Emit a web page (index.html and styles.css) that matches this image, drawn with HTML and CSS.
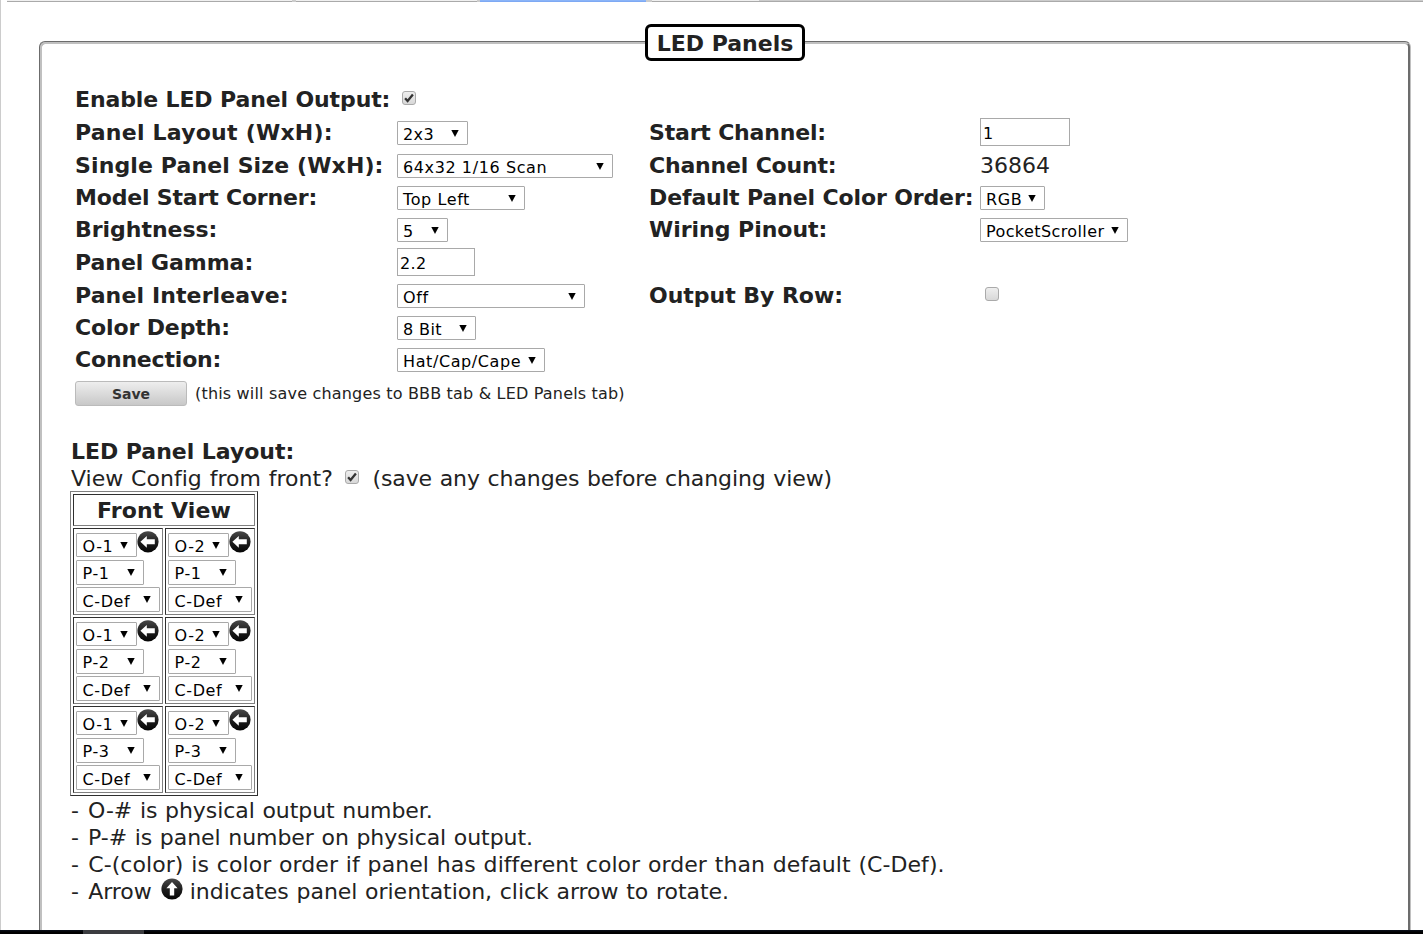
FILE: index.html
```html
<!DOCTYPE html>
<html lang="en">
<head>
<meta charset="utf-8">
<title>LED Panels</title>
<link rel="stylesheet" href="styles.css">
</head>
<body>
<svg class="defs" width="0" height="0">
  <defs>
    <linearGradient id="disc" x1="0" y1="0" x2="0" y2="1"><stop offset="0" stop-color="#484848"/><stop offset=".55" stop-color="#1c1c1c"/><stop offset="1" stop-color="#050505"/></linearGradient>
    <symbol id="left" viewBox="0 0 22 22"><circle cx="11" cy="10.8" r="10.6" fill="url(#disc)"/><path d="M3.4 10.8 9.8 5V8.3H17.8V13.2H9.8V16.8Z" fill="#fff"/></symbol>
    <symbol id="up" viewBox="0 0 22 22"><circle cx="11" cy="11" r="10.6" fill="url(#disc)"/><path d="M11 4 16.6 10.2H13.2V17.6H8.8V10.2H5.4Z" fill="#fff"/></symbol>
    <symbol id="caret" viewBox="0 0 8 7"><path d="M.3 0H7.7L4 7Z"/></symbol>
    <symbol id="check" viewBox="0 0 14 14"><path d="M3.1 7.2 5.6 10 10.9 3.6" fill="none" stroke="#333" stroke-width="2.3"/></symbol>
  </defs>
</svg>
<div class="page">
  <div class="tabs"><i class="tab t1"></i><i class="tab t2"></i><i class="tab active"></i><i class="tab t3"></i><i class="strip"></i></div>
  <section class="panel">
    <h1 class="legend">LED Panels</h1>
    <div class="form">
      <b>Enable LED Panel Output:</b><span class="box main"><svg><use href="#check"/></svg></span><b></b><span></span>
      <b class="loose">Panel Layout (WxH):</b><div class="select snug" style="width:71px">2x3<svg><use href="#caret"/></svg></div><b class="tight">Start Channel:</b><div class="input" style="width:90px">1</div>
      <b class="semi">Single Panel Size (WxH):</b><div class="select" style="width:216px">64x32 1/16 Scan<svg><use href="#caret"/></svg></div><b class="tight">Channel Count:</b><span class="value">36864</span>
      <b class="tight">Model Start Corner:</b><div class="select" style="width:128px">Top Left<svg><use href="#caret"/></svg></div><b>Default Panel Color Order:</b><div class="select" style="width:65px">RGB<svg><use href="#caret"/></svg></div>
      <b class="even">Brightness:</b><div class="select" style="width:51px">5<svg><use href="#caret"/></svg></div><b class="even">Wiring Pinout:</b><div class="select snug" style="width:148px">PocketScroller<svg><use href="#caret"/></svg></div>
      <b class="even">Panel Gamma:</b><div class="input" style="width:78px">2.2</div><b></b><span></span>
      <b class="semi">Panel Interleave:</b><div class="select" style="width:188px">Off<svg><use href="#caret"/></svg></div><b class="even">Output By Row:</b><span class="box row"></span>
      <b>Color Depth:</b><div class="select snug" style="width:79px">8 Bit<svg><use href="#caret"/></svg></div><b></b><span></span>
      <b class="tight">Connection:</b><div class="select" style="width:148px">Hat/Cap/Cape<svg><use href="#caret"/></svg></div><b></b><span></span>
    </div>
    <div class="save"><button>Save</button><span>(this will save changes to BBB tab &amp; LED Panels tab)</span></div>
    <div class="layout">
      <b class="line even">LED Panel Layout:</b>
      <div class="line view"><span class="question">View Config from front?</span><span class="box"><svg><use href="#check"/></svg></span><span class="hint">(save any changes before changing view)</span></div>
      <div class="grid">
        <b class="front">Front View</b>
        <div class="cell"><div class="top"><div class="select o">O-1<svg><use href="#caret"/></svg></div><svg class="arrow"><use href="#left"/></svg></div><div class="select p">P-1<svg><use href="#caret"/></svg></div><div class="select c">C-Def<svg><use href="#caret"/></svg></div></div>
        <div class="cell"><div class="top"><div class="select o">O-2<svg><use href="#caret"/></svg></div><svg class="arrow"><use href="#left"/></svg></div><div class="select p">P-1<svg><use href="#caret"/></svg></div><div class="select c">C-Def<svg><use href="#caret"/></svg></div></div>
        <div class="cell"><div class="top"><div class="select o">O-1<svg><use href="#caret"/></svg></div><svg class="arrow"><use href="#left"/></svg></div><div class="select p">P-2<svg><use href="#caret"/></svg></div><div class="select c">C-Def<svg><use href="#caret"/></svg></div></div>
        <div class="cell"><div class="top"><div class="select o">O-2<svg><use href="#caret"/></svg></div><svg class="arrow"><use href="#left"/></svg></div><div class="select p">P-2<svg><use href="#caret"/></svg></div><div class="select c">C-Def<svg><use href="#caret"/></svg></div></div>
        <div class="cell"><div class="top"><div class="select o">O-1<svg><use href="#caret"/></svg></div><svg class="arrow"><use href="#left"/></svg></div><div class="select p">P-3<svg><use href="#caret"/></svg></div><div class="select c">C-Def<svg><use href="#caret"/></svg></div></div>
        <div class="cell"><div class="top"><div class="select o">O-2<svg><use href="#caret"/></svg></div><svg class="arrow"><use href="#left"/></svg></div><div class="select p">P-3<svg><use href="#caret"/></svg></div><div class="select c">C-Def<svg><use href="#caret"/></svg></div></div>
      </div>
      <div class="notes">
        <div class="line"><span class="dash">-</span> O-# is physical output number.</div>
        <div class="line"><span class="dash">-</span> P-# is panel number on physical output.</div>
        <div class="line color-note"><span class="dash">-</span> C-(color) is color order if panel has different color order than default (C-Def).</div>
        <div class="line last"><span><span class="dash">-</span> Arrow</span><svg class="arrow"><use href="#up"/></svg><span>indicates panel orientation, click arrow to rotate.</span></div>
      </div>
    </div>
  </section>
  <div class="taskbar"><i></i></div>
</div>
</body>
</html>
```
FILE: styles.css
```css
* { box-sizing: border-box; }
body { margin: 0; background: #fff; color: #222; font: 22px/27px "DejaVu Sans", Verdana, sans-serif; letter-spacing: 0; overflow: hidden; }
.defs { position: absolute; }
.page { height: 934px; border-left: 1px solid #ccc; display: flex; flex-direction: column; white-space: nowrap; }
.tabs { height: 2px; display: flex; padding-left: 6px; flex: none; background: linear-gradient(90deg, transparent 7px, #ccc 7px); }
.tabs i { height: 2px; background: #f0f0f0; border-bottom: 1px solid #aaa; }
.tabs .t1 { width: 285px; }
.tabs .t2 { width: 181px; margin-left: 4px; }
.tabs .active { width: 166px; margin-left: 3px; background: #8ab4f8; border-color: #7ea9f3; }
.tabs .t3 { width: 107px; margin-left: 6px; }
.tabs .strip { flex: 1; background: #ccc; }
.panel { width: 1372px; height: 889px; margin: 39px 0 0 38px; border: 3px groove #c0c0c0; border-bottom: 0; border-radius: 6px; border-bottom-left-radius: 0; border-bottom-right-radius: 0; flex: none; }
.legend { width: 160px; height: 37px; margin: -20px 0 0 603px; border: 3px solid #000; border-radius: 6px; background: #fff; text-align: center; font-size: 22px; line-height: 33px; }
.form { display: grid; grid-template-columns: 322px 252px 331px 200px; grid-template-rows: 33px 33px 32px 32px 33px 33px 32px 32px 32px; margin: 22px 0 0 33px; align-items: start; }
.form b, .value { line-height: 33px; }
.form b { letter-spacing: -0.12px; }
.form .tight { letter-spacing: -0.18px; }
.form .even, .even { letter-spacing: -0.03px; }
.form .semi { letter-spacing: 0.12px; }
.form .loose { letter-spacing: 0.23px; }
.select { height: 24px; margin-top: 5px; border: 1px solid #a9a9a9; border-radius: 1px; padding: 1px 8px 0 5px; display: flex; justify-content: space-between; color: #000; font-size: 16px; line-height: 23px; letter-spacing: 0.6px; background: #fff; }
.select.snug { letter-spacing: 0.4px; }
.select svg { width: 8px; height: 7px; margin-top: 7px; flex: none; }
.input { height: 28px; margin-top: 2px; border: 1px solid #a9a9a9; padding: 1px 2px; color: #000; font-size: 16px; line-height: 28px; letter-spacing: 0.4px; }
.box { width: 14px; height: 14px; border: 1px solid #aaa; border-radius: 3px; background: linear-gradient(#eee, #d8d8d8); display: block; flex: none; }
.box svg { display: block; width: 14px; height: 14px; margin: -1px; }
.box.main { margin: 8px 0 0 5px; }
.box.row { margin: 8px 0 0 5px; }
.save { display: flex; margin: 6px 0 0 33px; height: 25px; align-items: center; font-size: 16px; letter-spacing: 0.18px; gap: 8px; }
.save button { width: 112px; height: 25px; border: 1px solid #bbb; border-radius: 3px; background: linear-gradient(#eee, #c8c8c8); color: #333; padding: 0; font: bold 14px "DejaVu Sans", sans-serif; }
.layout { margin: 32px 0 0 29px; }
.line { display: block; height: 27px; }
.view { display: flex; align-items: center; word-spacing: 0.75px; }
.question { letter-spacing: 0.03px; }
.hint { letter-spacing: -0.09px; }
.view .box { margin: -4px 13px 0 12.5px; }
.grid { display: grid; grid-template-columns: 90px 90px; grid-template-rows: 32px 87px 87px 87px; gap: 2px; width: 188px; height: 305px; margin: -1px 0 0 -1px; padding: 2px; border: 1px solid; border-color: #808080 #303030 #303030 #808080; }
.front { grid-column: 1 / 3; border: 1px solid; border-color: #303030 #808080 #808080 #303030; text-align: center; line-height: 32px; letter-spacing: 0.1px; }
.cell { border: 1px solid; border-color: #303030 #808080 #808080 #303030; padding: 2px; }
.top { display: flex; height: 29px; }
.cell .select { margin-top: 3px; height: 25px; padding-left: 5.5px; }
.cell .o { width: 61px; margin-top: 2px; height: 24px; }
.cell .p { width: 68px; margin-top: 0; }
.cell .c { width: 84px; margin-top: 2px; padding-top: 2px; }
.cell .c svg { margin-top: 6px; }
.arrow { width: 22px; height: 22px; flex: none; display: block; }
.notes { margin-top: 1px; word-spacing: 0.75px; letter-spacing: -0.06px; }
.dash { margin-right: 1.5px; }
.color-note { letter-spacing: 0.06px; }
.last { display: flex; letter-spacing: -0.03px; }
.last .arrow { margin: 0 7px 0 9px; }
.taskbar { height: 4px; background: linear-gradient(#0b111c, #000 60%); flex: none; margin-left: -1px; }
.taskbar i { display: block; width: 61px; height: 4px; margin-left: 83px; background: #3b3c40; }
```
